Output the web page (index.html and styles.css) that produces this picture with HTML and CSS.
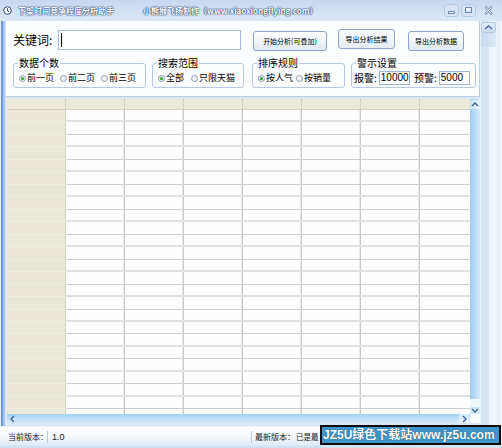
FILE: index.html
```html
<!DOCTYPE html>
<html lang="zh">
<head>
<meta charset="utf-8">
<title>下架时间竞争程度分析助手</title>
<link rel="stylesheet" href="styles.css">
</head>
<body>
<div class="window">
  <div class="titlebar">
    <svg class="app-icon" width="9" height="9" viewBox="0 0 9 9"><circle cx="4.5" cy="4.5" r="3.8" fill="#fff" stroke="#2b4a78" stroke-width="1"/><path d="M4.5 2.2v2.6l1.4 1" fill="none" stroke="#2b4a78" stroke-width="1"/></svg>
    <span class="title">下架时间竞争程度分析助手</span>
    <span class="title title2">小熊猴飞扬制作（www.xiaoxiongflying.com）</span>
    <div class="controls">
      <svg class="ctl" width="15" height="13" viewBox="0 0 15 13"><rect x="0.5" y="0.5" width="14" height="12" rx="3" fill="#d6e4f5" stroke="#b3c8e4"/><rect x="4.5" y="7.5" width="6" height="2" fill="#fff" stroke="#6f8bb3" stroke-width="1"/></svg>
      <svg class="ctl" width="15" height="13" viewBox="0 0 15 13"><rect x="0.5" y="0.5" width="14" height="12" rx="3" fill="#d6e4f5" stroke="#b3c8e4"/><rect x="4.5" y="3.5" width="6" height="5" fill="none" stroke="#6f8bb3" stroke-width="1"/><rect x="5.5" y="4.5" width="4" height="1.5" fill="#fff"/></svg>
      <svg class="ctl close" width="17" height="13" viewBox="0 0 17 13"><path d="M6 3.5l5 6M11 3.5l-5 6" stroke="#6f8bb3" stroke-width="2.4" stroke-linecap="round"/><path d="M6 3.5l5 6M11 3.5l-5 6" stroke="#fff" stroke-width="1" stroke-linecap="round"/></svg>
    </div>
  </div>

  <div class="body">
    <div class="frame-l"></div>
    <div class="client">
      <div class="panel">
        <div class="row1">
          <span class="kw">关键词:</span>
          <div class="kw-input"><span class="caret"></span></div>
          <button class="btn b1">开始分析(可叠加)</button>
          <button class="btn b2">导出分析结果</button>
          <button class="btn b3">导出分析数据</button>
        </div>
        <div class="row2">
          <fieldset class="group g1">
            <legend>数据个数</legend>
            <div class="opts">
              <span class="opt"><span class="radio on"></span>前一页</span>
              <span class="opt"><span class="radio"></span>前二页</span>
              <span class="opt"><span class="radio"></span>前三页</span>
            </div>
          </fieldset>
          <fieldset class="group g2">
            <legend>搜索范围</legend>
            <div class="opts">
              <span class="opt"><span class="radio on"></span>全部</span>
              <span class="opt"><span class="radio"></span>只限天猫</span>
            </div>
          </fieldset>
          <fieldset class="group g3">
            <legend>排序规则</legend>
            <div class="opts">
              <span class="opt"><span class="radio on"></span>按人气</span>
              <span class="opt"><span class="radio"></span>按销量</span>
            </div>
          </fieldset>
          <fieldset class="group g4">
            <legend>警示设置</legend>
            <div class="opts">
              <span class="lbl">报警:</span>
              <span class="num">10000</span>
              <span class="lbl lbl2">预警:</span>
              <span class="num">5000</span>
            </div>
          </fieldset>
        </div>
      </div>

      <div class="gridwrap">
        <div class="grid-main">
          <div class="grid">
            <div class="hdr">
              <span class="hc corner"></span><span class="hc"></span><span class="hc"></span><span class="hc"></span><span class="hc"></span><span class="hc"></span><span class="hc"></span><span class="hc"></span>
            </div>
            <div class="rows">
              <div class="row a"><span class="rh"></span><span class="rc"></span></div>
              <div class="row b"><span class="rh"></span><span class="rc"></span></div>
              <div class="row a"><span class="rh"></span><span class="rc"></span></div>
              <div class="row b"><span class="rh"></span><span class="rc"></span></div>
              <div class="row a"><span class="rh"></span><span class="rc"></span></div>
              <div class="row b"><span class="rh"></span><span class="rc"></span></div>
              <div class="row a"><span class="rh"></span><span class="rc"></span></div>
              <div class="row b"><span class="rh"></span><span class="rc"></span></div>
              <div class="row a"><span class="rh"></span><span class="rc"></span></div>
              <div class="row b"><span class="rh"></span><span class="rc"></span></div>
              <div class="row a"><span class="rh"></span><span class="rc"></span></div>
              <div class="row b"><span class="rh"></span><span class="rc"></span></div>
              <div class="row a"><span class="rh"></span><span class="rc"></span></div>
              <div class="row b"><span class="rh"></span><span class="rc"></span></div>
              <div class="row a"><span class="rh"></span><span class="rc"></span></div>
              <div class="row b"><span class="rh"></span><span class="rc"></span></div>
              <div class="row a"><span class="rh"></span><span class="rc"></span></div>
              <div class="row b"><span class="rh"></span><span class="rc"></span></div>
              <div class="row a"><span class="rh"></span><span class="rc"></span></div>
              <div class="row b"><span class="rh"></span><span class="rc"></span></div>
              <div class="row a"><span class="rh"></span><span class="rc"></span></div>
              <div class="row b"><span class="rh"></span><span class="rc"></span></div>
              <div class="row a"><span class="rh"></span><span class="rc"></span></div>
              <div class="row b"><span class="rh"></span><span class="rc"></span></div>
              <div class="row a"><span class="rh"></span><span class="rc"></span></div>
            </div>
          </div>
          <div class="vscroll">
            <span class="sb-btn up"><svg width="8" height="5" viewBox="0 0 8 5"><path d="M1 4l3-3 3 3" fill="none" stroke="#3d5f8f" stroke-width="1.3"/></svg></span>
            <span class="sb-track"></span>
            <span class="sb-btn down"><svg width="8" height="5" viewBox="0 0 8 5"><path d="M1 1l3 3 3-3" fill="none" stroke="#3d5f8f" stroke-width="1.3"/></svg></span>
          </div>
        </div>
        <div class="hscroll-row">
          <div class="hscroll">
            <span class="hs-btn"><svg width="5" height="8" viewBox="0 0 5 8"><path d="M4 1L1 4l3 3" fill="none" stroke="#3d5f8f" stroke-width="1.3"/></svg></span>
            <span class="hs-track"></span>
            <span class="hs-btn right"><svg width="5" height="8" viewBox="0 0 5 8"><path d="M1 1l3 3-3 3" fill="none" stroke="#3d5f8f" stroke-width="1.3"/></svg></span>
          </div>
          <div class="sb-corner"></div>
        </div>
      </div>
    </div>
    <div class="outer-scroll">
      <span class="os-btn"><svg width="9" height="5" viewBox="0 0 9 5"><path d="M1 4l3.5-3 3.5 3" fill="none" stroke="#4a6a98" stroke-width="1.4"/></svg></span>
      <span class="os-thumb"></span>
      <span class="os-track"></span>
    </div>
    <div class="frame-r"></div>
  </div>

  <div class="status">
    <span class="st-cell st1">当前版本：</span>
    <span class="st-cell st2">1.0</span>
    <span class="st-cell st3">最新版本：</span>
    <span class="st-cell st4">已是最</span>
  </div>
  <div class="frame-b"></div>
</div>
<div class="watermark">JZ5U绿色下载站www.jz5u.com</div>
</body>
</html>
```

FILE: styles.css
```css
html, body {
  margin: 0;
  padding: 0;
}
body {
  width: 502px;
  height: 448px;
  overflow: hidden;
  position: relative;
  background: #dfe9f6;
  font-family: "Noto Sans CJK SC", "Liberation Sans", sans-serif;
  color: #000;
}
.window {
  width: 502px;
  height: 448px;
  display: flex;
  flex-direction: column;
}

/* title bar */
.titlebar {
  height: 21px;
  flex: none;
  display: flex;
  align-items: center;
  background: linear-gradient(180deg, #c5d8f1 0%, #d3e2f5 55%, #dde8f6 100%);
}
.app-icon {
  margin-left: 3px;
  flex: none;
}
.title {
  margin-left: 6px;
  font-size: 8px;
  line-height: 10px;
  font-weight: bold;
  color: #fff;
  white-space: nowrap;
  text-shadow: 0 0 1px #1d3d6c, 0 0 1px #1d3d6c, 0 0 2px #3a5f94;
}
.title2 {
  margin-left: 29px;
}
.controls {
  margin-left: auto;
  margin-right: 5px;
  display: flex;
  align-items: center;
  gap: 2px;
}
.ctl.close {
  margin-left: 2px;
}

/* body */
.body {
  height: 405px;
  flex: none;
  display: flex;
}
.frame-l {
  width: 6px;
  flex: none;
  background: linear-gradient(90deg, #e6eef8 0 1px, #6d9ad8 1px 3px, #a9c6ec 3px 5px, #d7e4f4 5px 6px);
}
.client {
  width: 474px;
  flex: none;
  display: flex;
  flex-direction: column;
  background: #dce8f5;
}
.panel {
  height: 76px;
  box-sizing: border-box;
  padding: 8px 0 0 7px;
  background: #fcfdfe;
  border-bottom: 1px solid #bcd0ea;
  border-right: 1px solid #bcd0ea;
}
.row1 {
  display: flex;
  align-items: flex-start;
  height: 22px;
}
.kw {
  width: 45px;
  font-size: 12px;
  line-height: 20px;
  margin-top: 1px;
  white-space: nowrap;
}
.kw-input {
  width: 183px;
  height: 20px;
  margin-top: 1px;
  box-sizing: border-box;
  border: 1px solid #a3bbdb;
  background: #fff;
  display: flex;
  align-items: center;
}
.caret {
  width: 1px;
  height: 14px;
  margin-left: 2px;
  background: #000;
}
.btn {
  height: 20px;
  box-sizing: border-box;
  padding: 0;
  border: 1px solid #8aa3c7;
  border-radius: 3px;
  background: linear-gradient(180deg, #ffffff 0%, #f1f4f9 50%, #e2e9f2 100%);
  font-family: "Noto Sans CJK SC", sans-serif;
  font-size: 7px;
  line-height: 18px;
  color: #000;
  white-space: nowrap;
}
.b1 { width: 74px; margin-left: 12px; margin-top: 2px; }
.b2 { width: 57px; margin-left: 11px; margin-top: 0; background: linear-gradient(180deg, #f9fbfd 0%, #e8edf4 100%); }
.b3 { width: 56px; margin-left: 13px; margin-top: 2px; }

.row2 {
  display: flex;
  align-items: flex-start;
  margin-top: 6px;
  margin-left: 0;
}
.group {
  margin: 0;
  padding: 0 5px;
  box-sizing: border-box;
  min-width: 0;
  border: 1px solid #b6c8e5;
  border-radius: 3px;
}
.group legend {
  padding: 0 1px;
  margin-left: -1px;
  font-size: 10px;
  line-height: 12px;
  color: #000;
}
.g1 { width: 133px; }
.g2 { width: 92px; margin-left: 6px; }
.g3 { width: 93px; margin-left: 8px; }
.g4 { width: 125px; margin-left: 6px; }
.opts {
  height: 18px;
  display: flex;
  align-items: center;
  font-size: 9px;
  line-height: 10px;
  white-space: nowrap;
}
.g1 .opts { gap: 6px; }
.g2 .opts { gap: 7px; }
.g3 .opts { gap: 3px; }
.g4 .opts { margin-left: -3px; font-size: 10px; }
.opt {
  display: flex;
  align-items: center;
}
.radio {
  width: 7px;
  height: 7px;
  margin-right: 1px;
  box-sizing: border-box;
  border: 1px solid #8e9db6;
  border-radius: 50%;
  background: radial-gradient(circle at 40% 40%, #ffffff 0%, #ecedf0 60%, #d6d9de 100%);
  display: flex;
  align-items: center;
  justify-content: center;
}
.radio.on::after {
  content: "";
  width: 3px;
  height: 3px;
  border-radius: 50%;
  background: #2f9e35;
}
.lbl { width: 23px; }
.lbl2 { margin-left: 4px; }
.num {
  width: 32px;
  height: 14px;
  margin-left: 2px;
  box-sizing: border-box;
  border: 1px solid #9fb6d6;
  background: #fff;
  font-family: "Liberation Sans", sans-serif;
  font-size: 10px;
  line-height: 12px;
  padding-left: 1px;
}

/* grid */
.gridwrap {
  margin-top: 2px;
  margin-left: 1px;
  display: flex;
  flex-direction: column;
}
.grid-main {
  height: 315px;
  display: flex;
}
.grid {
  width: 463px;
  height: 315px;
  overflow: hidden;
  display: flex;
  flex-direction: column;
  background: #fefefe;
}
.hdr {
  height: 11px;
  flex: none;
  display: flex;
  background: #ece9d9;
  border-bottom: 1px solid #d2cfc2;
  box-sizing: border-box;
}
.hc {
  width: 59px;
  flex: none;
  box-sizing: border-box;
  border-right: 1px dotted #bdb9ab;
}
.rows {
  flex: 1;
  overflow: hidden;
  display: flex;
  flex-direction: column;
}
.row {
  height: 12.47px;
  flex: none;
  display: flex;
}
.rh {
  width: 59px;
  flex: none;
  box-sizing: border-box;
  background: #ebe8d8;
  border-right: 1px solid #d5d2c5;
  border-bottom: 1px dotted #f7f4e9;
}
.rc {
  flex: 1;
  box-sizing: border-box;
  background: repeating-linear-gradient(90deg, #fefefe 0 57px, #e9e9e9 57px 58px, #c9c9c9 58px 59px);
}
.row.a .rc { border-bottom: 2px solid #e2e0e4; }
.row.b .rc { border-bottom: 1px solid #cfcfcf; }

.vscroll {
  width: 10px;
  flex: none;
  display: flex;
  flex-direction: column;
  background: linear-gradient(90deg, #9ccdf0 0%, #b9dcf5 50%, #d4ebfa 100%);
}
.sb-btn {
  height: 9px;
  flex: none;
  display: flex;
  align-items: center;
  justify-content: center;
  background: linear-gradient(90deg, #c7e4f8, #e6f3fc);
}
.sb-btn.up { margin-top: 1px; }
.sb-track { flex: 1; }
.sb-btn.down {
  height: 15px;
  background: linear-gradient(180deg, #eef6fc 0 8px, #cfe7f8 8px);
  align-items: flex-end;
  padding-bottom: 1px;
  box-sizing: border-box;
}
.hscroll-row {
  display: flex;
  height: 9px;
}
.hscroll {
  width: 463px;
  display: flex;
  background: linear-gradient(180deg, #a3d2f2 0%, #bfe0f7 50%, #d4ebfa 100%);
}
.hs-btn {
  width: 10px;
  flex: none;
  display: flex;
  align-items: center;
  justify-content: center;
}
.hs-btn.right {
  background: linear-gradient(180deg, #d2eafb, #eaf5fd);
  margin-right: 1px;
}
.hs-track { flex: 1; }
.sb-corner {
  width: 10px;
  background: #fbfcfd;
}

/* outer scrollbar */
.outer-scroll {
  width: 17px;
  flex: none;
  display: flex;
  flex-direction: column;
  background: linear-gradient(90deg, #e9f0f8 0 1px, #d6e5f5 1px 9px, #eef5fc 9px 17px);
}
.os-btn {
  height: 11px;
  margin: 1px 1px 0 1px;
  flex: none;
  box-sizing: border-box;
  border: 1px solid #b3cbe8;
  border-radius: 2px;
  background: linear-gradient(180deg, #e3eefa, #c8dcf3);
  display: flex;
  align-items: center;
  justify-content: center;
}
.os-thumb {
  height: 14px;
  margin: 0 1px;
  flex: none;
  background: linear-gradient(90deg, #c6daf1, #dbe8f7);
}
.os-track { flex: 1; }
.frame-r {
  width: 5px;
  flex: none;
  background: linear-gradient(90deg, #e4ecf6, #f4f8fc);
}

/* status */
.status {
  height: 20px;
  flex: none;
  box-sizing: border-box;
  border-top: 1px solid #eef3f9;
  display: flex;
  align-items: center;
  padding-left: 8px;
  background: linear-gradient(180deg, #ffffff 0%, #f4f8fc 50%, #dde8f5 100%);
  font-size: 8px;
  line-height: 12px;
  color: #222;
  white-space: nowrap;
}
.st-cell { display: block; }
.st1 {
  width: 39px;
  border-right: 1px solid #b8c7da;
}
.st2 {
  width: 199px;
  padding-left: 4px;
  font-family: "Liberation Sans", sans-serif;
  font-size: 9px;
  border-right: 1px solid #b8c7da;
}
.st3 {
  padding-left: 3px;
  width: 40px;
}
.st4 {
  margin-left: 1px;
  font-size: 7.5px;
}
.frame-b {
  height: 2px;
  flex: none;
  background: #d3e0f0;
}

/* overlay watermark */
.watermark {
  position: absolute;
  left: 320px;
  top: 425px;
  width: 181px;
  height: 20px;
  box-sizing: border-box;
  border: 2px solid #0d0d0d;
  background: #3f95c9;
  color: #fff;
  font-family: "Liberation Sans", "Noto Sans CJK SC", sans-serif;
  font-size: 12px;
  font-weight: bold;
  line-height: 16px;
  padding-left: 1px;
  white-space: nowrap;
  overflow: hidden;
  text-shadow: 0 0 1px #143c5c;
}
```
